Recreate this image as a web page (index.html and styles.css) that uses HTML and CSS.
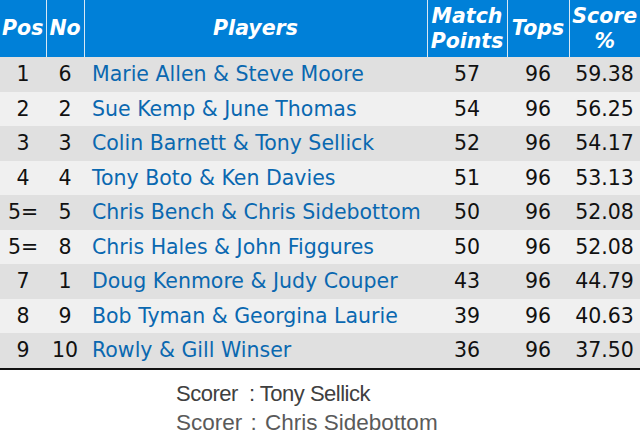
FILE: index.html
```html
<!DOCTYPE html>
<html>
<head>
<meta charset="utf-8">
<link rel="stylesheet" href="styles.css">
</head>
<body>
<table class="results">
  <colgroup>
    <col class="c-pos"><col class="c-no"><col class="c-players"><col class="c-mp"><col class="c-tops"><col class="c-score">
  </colgroup>
  <thead>
    <tr>
      <th>Pos</th><th>No</th><th>Players</th><th>Match<br>Points</th><th>Tops</th><th>Score<br>%</th>
    </tr>
  </thead>
  <tbody>
    <tr><td>1</td><td>6</td><td class="pl">Marie Allen &amp; Steve Moore</td><td>57</td><td>96</td><td>59.38</td></tr>
    <tr><td>2</td><td>2</td><td class="pl">Sue Kemp &amp; June Thomas</td><td>54</td><td>96</td><td>56.25</td></tr>
    <tr><td>3</td><td>3</td><td class="pl">Colin Barnett &amp; Tony Sellick</td><td>52</td><td>96</td><td>54.17</td></tr>
    <tr><td>4</td><td>4</td><td class="pl">Tony Boto &amp; Ken Davies</td><td>51</td><td>96</td><td>53.13</td></tr>
    <tr><td>5=</td><td>5</td><td class="pl">Chris Bench &amp; Chris Sidebottom</td><td>50</td><td>96</td><td>52.08</td></tr>
    <tr><td>5=</td><td>8</td><td class="pl">Chris Hales &amp; John Figgures</td><td>50</td><td>96</td><td>52.08</td></tr>
    <tr><td>7</td><td>1</td><td class="pl">Doug Kenmore &amp; Judy Couper</td><td>43</td><td>96</td><td>44.79</td></tr>
    <tr><td>8</td><td>9</td><td class="pl">Bob Tyman &amp; Georgina Laurie</td><td>39</td><td>96</td><td>40.63</td></tr>
    <tr><td>9</td><td>10</td><td class="pl">Rowly &amp; Gill Winser</td><td>36</td><td>96</td><td>37.50</td></tr>
  </tbody>
</table>
<div class="scorers">
  <div class="scorer scorer-a">Scorer&nbsp; : Tony Sellick</div>
  <div class="scorer scorer-b">Scorer <span class="sep">:</span> Chris Sidebottom</div>
</div>
</body>
</html>
```
FILE: styles.css
```css
html, body {
  margin: 0;
  padding: 0;
  background: #ffffff;
}
.results {
  width: 640px;
  border-collapse: collapse;
  table-layout: fixed;
  font-family: "DejaVu Sans", Verdana, sans-serif;
  font-size: 20.5px;
}
.c-pos { width: 46px; }
.c-no { width: 38px; }
.c-players { width: 343px; }
.c-mp { width: 80px; }
.c-tops { width: 62px; }
.c-score { width: 71px; }
.results th {
  background: #0080d8;
  color: #ffffff;
  font-weight: bold;
  font-style: italic;
  height: 57px;
  padding: 0;
  line-height: 25px;
  border-left: 1px solid #d8e8f4;
  text-align: center;
  white-space: nowrap;
}
.results th:first-child { border-left: none; }
.results td {
  height: 34.5px;
  padding: 0;
  text-align: center;
  color: #111111;
  white-space: nowrap;
}
.results tbody tr:nth-child(odd) { background: #e0e0e0; }
.results tbody tr:nth-child(even) { background: #f0f0f0; }
.results tbody tr:last-child td { border-bottom: 2px solid #111111; }
.results td.pl {
  text-align: left;
  padding-left: 8px;
  color: #0a68b0;
}
.scorers {
  padding-top: 9px;
  padding-left: 176px;
  font-family: "Liberation Sans", Arial, sans-serif;
  line-height: 29px;
  white-space: nowrap;
}
.scorer-a {
  font-size: 22px;
  letter-spacing: -0.5px;
  color: #404040;
}
.scorer-b {
  font-size: 22.5px;
  color: #5a5a5a;
}
.sep {
  margin: 0 2px;
}
```
